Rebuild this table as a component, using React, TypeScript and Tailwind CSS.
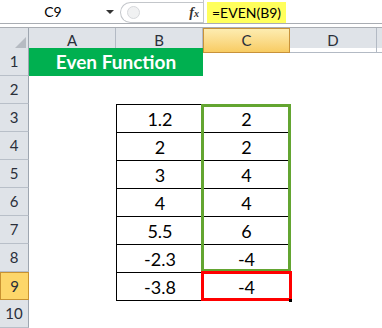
import React from "react";

const COLS = "grid grid-cols-[29px_87px_87px_87px_87px_1fr]";
const bVals = ["1.2", "2", "3", "4", "5.5", "-2.3", "-3.8"];
const cVals = ["2", "2", "4", "4", "6", "-4", "-4"];

function RowHeader({ n }: { n: number }) {
  const sel = n === 9;
  return (
    <div
      className={
        sel
          ? "h-[28px] flex items-center justify-center bg-[#fdd66a] border border-[#c89231] text-[15px] text-[#2a2f3a]"
          : "h-[28px] flex items-center justify-center bg-[#dfe3e8] border-r border-r-[#9ea6b0] border-b border-b-[#b8bfc8] text-[15px] text-[#2a2f3a]"
      }
    >
      {n}
    </div>
  );
}

function Cell({ className = "", children }: { className?: string; children?: React.ReactNode }) {
  return (
    <div className={"h-[28px] flex items-end justify-center pb-[2px] text-[18px] leading-[22px] text-black " + className}>
      {children}
    </div>
  );
}

export default function App() {
  const rows = Array.from({ length: 10 }, (_, i) => i + 1);
  return (
    <div className="w-[382px] h-[328px] overflow-hidden bg-white font-['Lato',sans-serif]">
      {/* Formula bar */}
      <div className="flex h-[24px] bg-white border-b border-[#a9adb3]">
        <div className="w-[120px] relative flex items-center">
          <span className="w-[106px] text-center text-[14px] text-black leading-none pt-[1px]">C9</span>
          <span className="w-0 h-0 border-l-[4px] border-r-[4px] border-t-[4px] border-l-transparent border-r-transparent border-t-[#333]" />
        </div>
        <div className="w-[83px] mt-[2px] flex items-center rounded-l-full border border-r-0 border-[#c3c6ca] bg-white">
          <div className="ml-[6px] w-[13px] h-[13px] rounded-full border border-[#d6d8db] bg-[#f0f1f2]" />
          <span className="ml-auto mr-[4px] font-['Liberation_Serif',serif] italic font-bold text-[14px] text-[#333] leading-none">
            f<span className="text-[10px]">x</span>
          </span>
        </div>
        <div className="flex-1 flex items-center border-l border-[#c3c6ca]">
          <div className="ml-[3px] mt-[2px] h-[21px] px-[5px] bg-[#ffff5c] flex items-center text-[14px] text-black leading-none">
            =EVEN(B9)
          </div>
        </div>
      </div>
      <div className="h-[4px] bg-white border-b border-[#a9adb3]" />

      {/* Column headers */}
      <div className={COLS + " h-[20px] bg-[#dfe3e8] text-[15px] text-[#2a2f3a]"}>
        <div className="relative border-r border-b border-[#9ea6b0]">
          <svg className="absolute right-[2px] bottom-[2px]" width="13" height="13" viewBox="0 0 13 13">
            <polygon points="13,0 13,13 0,13" fill="#b6bbc2" />
          </svg>
        </div>
        <div className="flex items-center justify-center border-r border-b border-[#b3bac4]">A</div>
        <div className="flex items-center justify-center border-r border-b border-[#b3bac4]">B</div>
        <div className="flex items-center justify-center border border-[#c8923a] bg-gradient-to-b from-[#fdecb0] to-[#f8cc62]">C</div>
        <div className="flex items-center justify-center border-r border-b border-[#b3bac4]">D</div>
        <div className="border-b border-[#b3bac4]" />
      </div>

      {/* Body */}
      <div className="relative">
        {rows.map((n) => {
          const tbl = n >= 3 && n <= 9;
          const idx = n - 3;
          return (
            <div key={n} className={COLS}>
              <RowHeader n={n} />
              {n === 1 ? (
                <div className="col-span-2 h-[28px] bg-[#00b050] flex items-center justify-center text-white font-bold text-[19px]">
                  Even Function
                </div>
              ) : (
                <>
                  <Cell />
                  <Cell className={tbl ? "border-l border-t border-black" : n === 10 ? "border-t border-black" : ""}>
                    {tbl ? bVals[idx] : null}
                  </Cell>
                </>
              )}
              {n === 1 ? (
                <Cell />
              ) : (
                <Cell className={tbl || n === 10 ? "border-t border-black" : ""}>{tbl ? cVals[idx] : null}</Cell>
              )}
              <Cell className={tbl ? "border-l border-black" : ""} />
              <Cell />
            </div>
          );
        })}
        <div className="absolute left-[201px] top-[56px] w-[90px] h-[168px] border-[3px] border-[#63a531]" />
        <div className="absolute left-[201px] top-[223px] w-[91px] h-[30px] border-[3px] border-[#ff0000]" />
        <div className="absolute left-[289px] top-[251px] w-[3px] h-[3px] bg-black" />
      </div>
    </div>
  );
}
